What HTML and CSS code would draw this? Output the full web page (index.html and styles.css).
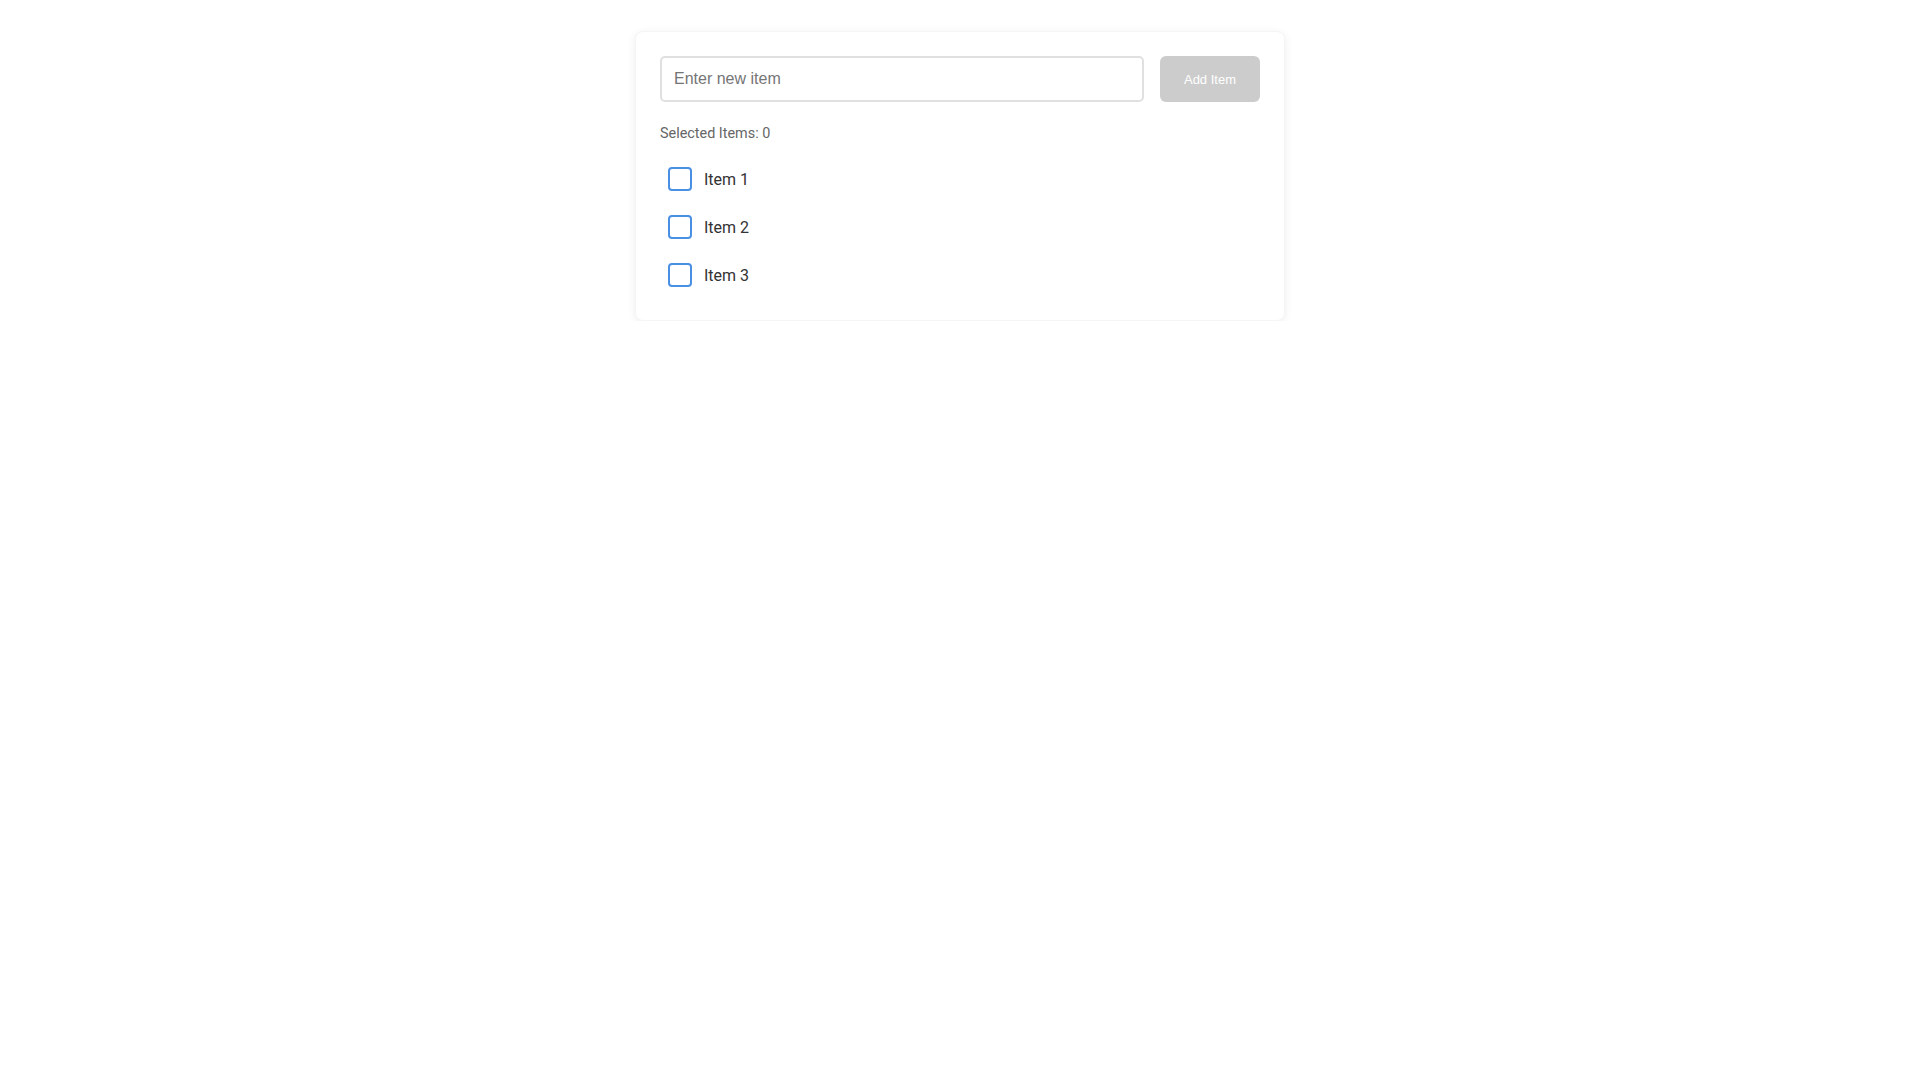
FILE: index.html
```html
<!DOCTYPE html>
<html>
<head>
<title>Item Selector</title>
<meta name="viewport" content="width=device-width, initial-scale=1.0">
<link rel="stylesheet" href="styles.css">
</head>
<body>

<div class="card">
    <div class="add-row">
        <input type="text" class="item-input" placeholder="Enter new item">
        <button type="button" class="add-button" disabled>Add Item</button>
    </div>

    <div class="selected-count">Selected Items: 0</div>

    <ul class="item-list">
        <li class="item"><span class="box"></span><span class="item-label">Item 1</span></li>
        <li class="item"><span class="box"></span><span class="item-label">Item 2</span></li>
        <li class="item"><span class="box"></span><span class="item-label">Item 3</span></li>
    </ul>
</div>

</body>
</html>
```

FILE: styles.css
```css
body {
    font-family: 'Roboto', sans-serif;
    margin: 0;
    padding-top: 31px;
    background-color: #ffffff;
}
.card {
    width: 600px;
    margin: 0 auto;
    padding: 24px 24px 27px;
    border: 1px solid #f5f5f5;
    border-radius: 8px;
    box-shadow: 0 2px 10px rgba(0, 0, 0, 0.07);
    background: #ffffff;
}
.add-row {
    display: flex;
    gap: 16px;
}
.item-input {
    flex: 1;
    height: 46px;
    padding: 0 12px;
    border: 2px solid #e0e0e0;
    border-radius: 5px;
    font-family: 'Liberation Sans', Arial, sans-serif;
    font-size: 16px;
    color: #333;
    box-sizing: border-box;
    outline: none;
}
.item-input::placeholder {
    color: #757575;
}
.add-button {
    height: 46px;
    padding: 0 24px;
    border: none;
    border-radius: 6px;
    background-color: #cccccc;
    color: #ffffff;
    font-family: 'Liberation Sans', Arial, sans-serif;
    font-size: 13px;
}
.selected-count {
    margin-top: 23px;
    font-size: 14.4px;
    line-height: 18px;
    color: #666666;
}
.item-list {
    list-style: none;
    margin: 18px 0 0;
    padding: 0;
    display: flex;
    flex-direction: column;
    gap: 12px;
}
.item {
    display: flex;
    align-items: center;
    gap: 12px;
    padding: 6px 8px;
}
.box {
    width: 24px;
    height: 24px;
    border: 2px solid #4a90e2;
    border-radius: 4px;
    box-sizing: border-box;
}
.item-label {
    font-size: 16px;
    color: #333333;
}
```
